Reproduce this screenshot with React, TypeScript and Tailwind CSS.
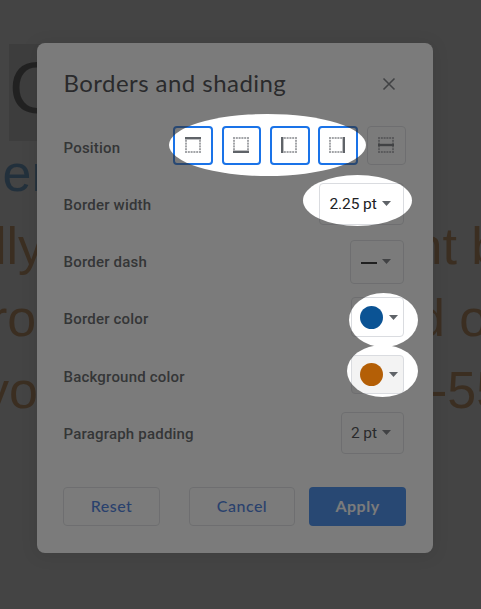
import type { ReactNode } from "react";

type Side = "top" | "bottom" | "left" | "right" | "between";

const bars: Record<Side, [number, number, number, number]> = {
  top: [0, 0, 16, 2.4],
  bottom: [0, 13.6, 16, 2.4],
  left: [0, 0, 2.4, 16],
  right: [13.6, 0, 2.4, 16],
  between: [0, 6.8, 16, 2.4],
};

function BorderIcon({ side }: { side: Side }) {
  const dots: [number, number][] = [];
  for (let i = 0; i < 6; i++) {
    const p = i * 2.8;
    if (side !== "top") dots.push([p, 0]);
    if (side !== "bottom") dots.push([p, 14]);
    if (side !== "left" && i > 0 && i < 5) dots.push([0, p]);
    if (side !== "right" && i > 0 && i < 5) dots.push([14, p]);
  }
  const [x, y, w, h] = bars[side];
  return (
    <svg width="16" height="16" viewBox="0 0 16 16">
      {dots.map(([dx, dy], i) => (
        <rect key={i} x={dx} y={dy} width="2" height="2" fill="#a3a5a8" />
      ))}
      <rect x={x} y={y} width={w} height={h} fill="#5f6368" />
    </svg>
  );
}

function Caret() {
  return (
    <svg className="shrink-0" width="9" height="5" viewBox="0 0 9 5">
      <path d="M0 0h9L4.5 5z" fill="#5f6368" />
    </svg>
  );
}

function Row({ label, children }: { label: string; children: ReactNode }) {
  return (
    <div className="flex h-[57.2px] items-center justify-between">
      <span className="pt-[0.9px] text-[15px] font-medium tracking-[0.2px] whitespace-nowrap text-[#3c4043]">{label}</span>
      {children}
    </div>
  );
}

const box = "mr-[2px] flex items-center rounded-[4px] border border-[#dadce0]";
const button = "flex h-[39px] items-center justify-center rounded-[4px] pb-[2px] text-[16px]";
const active = "h-[39px] rounded-[4px] border-2 border-[#1a73e8] pt-[9px]";

function Document() {
  return (
    <div className="absolute inset-0 overflow-hidden bg-[#666666] font-['Liberation_Sans',Arial,sans-serif] text-[52px] leading-[72px] whitespace-pre">
      <div className="mt-[44px] ml-[9px] h-[97px] w-[200px] bg-[#555555] text-[72px] leading-[88px] text-[#080808]">C</div>
      <div className="-mt-[4px] mb-px -ml-[9px] h-[72px] text-[#0a3050]">ier</div>
      <div className="flex h-[72px] text-[#4e2b08]">
        <span className="-ml-[5px] w-[418.5px] shrink-0">lly</span>
        <span>nt b</span>
      </div>
      <div className="flex h-[72px] text-[#4e2b08]">
        <span className="-ml-[10px] w-[426px] shrink-0">ro</span>
        <span>d o</span>
      </div>
      <div className="flex h-[72px] text-[#4e2b08]">
        <span className="-ml-[17px] w-[447px] shrink-0">yo</span>
        <span>-55</span>
      </div>
    </div>
  );
}

function Spotlight() {
  return (
    <svg className="pointer-events-none absolute inset-0" width="481" height="609" viewBox="0 0 481 609">
      <defs>
        <mask id="spots">
          <rect width="481" height="609" fill="white" />
          <ellipse cx="267.5" cy="145" rx="98.5" ry="31" fill="black" />
          <ellipse cx="357.5" cy="200.5" rx="54.5" ry="25.5" fill="black" />
          <ellipse cx="383.5" cy="320" rx="34.5" ry="27" fill="black" />
          <ellipse cx="382.5" cy="371" rx="35.5" ry="26" fill="black" />
        </mask>
      </defs>
      <rect width="481" height="609" fill="#303030" fillOpacity="0.64" mask="url(#spots)" />
    </svg>
  );
}

export default function App() {
  return (
    <div className="relative h-[609px] w-[481px] overflow-hidden font-['Roboto',sans-serif]">
      <Document />
      <div className="relative mt-[43px] ml-[37px] flex h-[510px] w-[396px] flex-col rounded-[8px] bg-white pr-[27px] pl-[26.5px] shadow-[0_2px_16px_rgba(0,0,0,0.15)]">
        <div className="flex h-[76px] items-center justify-between pt-[6px] pr-[10px]">
          <h1 className="-mt-[2px] font-['Lato',sans-serif] text-[24px] tracking-[0.45px] text-[#202124]">Borders and shading</h1>
          <svg width="14" height="14" viewBox="0 0 14 14" stroke="#5f6368" strokeWidth="1.6">
            <path d="M1.5 1.5l11 11M12.5 1.5l-11 11" />
          </svg>
        </div>
        <Row label="Position">
          <div className="-mt-[4.2px] flex">
            <div className={`${active} w-[40px] pl-[10px]`}>
              <BorderIcon side="top" />
            </div>
            <div className={`${active} ml-[9px] w-[39px] pl-[9px]`}>
              <BorderIcon side="bottom" />
            </div>
            <div className={`${active} ml-[9px] w-[40px] pl-[9px]`}>
              <BorderIcon side="left" />
            </div>
            <div className={`${active} ml-[8px] w-[40px] pl-[9px]`}>
              <BorderIcon side="right" />
            </div>
            <div className="ml-[9px] h-[39px] w-[39px] rounded-[4px] border border-[#dadce0] pt-[10px] pl-[10px]">
              <BorderIcon side="between" />
            </div>
          </div>
        </Row>
        <Row label="Border width">
          <div className={`${box} -mt-[2px] h-[42px] w-[85px] gap-[5px] pl-[9.5px] text-[15.5px] text-[#202124]`}>
            <span className="w-[47.5px] pt-px tracking-[-0.1px] whitespace-nowrap">2.25 pt</span>
            <Caret />
          </div>
        </Row>
        <Row label="Border dash">
          <div className={`${box} h-[44px] w-[54px] gap-[5px] pl-[10px]`}>
            <span className="mt-[2px] h-[2px] w-[16px] bg-black" />
            <Caret />
          </div>
        </Row>
        <Row label="Border color">
          <div className={`${box} -mt-[4px] h-[40px] w-[53px] gap-[6px] pl-[7.5px]`}>
            <span className="h-[23px] w-[23px] rounded-full bg-[#0b5394]" />
            <Caret />
          </div>
        </Row>
        <Row label="Background color">
          <div className={`${box} -mt-[4px] h-[39px] w-[53px] gap-[6px] bg-[#f3f3f3] pl-[7.5px]`}>
            <span className="h-[23px] w-[23px] rounded-full bg-[#b45f06]" />
            <Caret />
          </div>
        </Row>
        <Row label="Paragraph padding">
          <div className={`${box} -mt-[2px] h-[42px] w-[63px] gap-[5px] pl-[9px] text-[15.5px] text-[#202124]`}>
            <span className="w-[26px] pt-[1.5px] tracking-[-0.1px] whitespace-nowrap">2 pt</span>
            <Caret />
          </div>
        </Row>
        <div className="mt-[25px] -ml-[0.5px] flex font-['Lato',sans-serif] tracking-[0.5px]">
          <div className={`${button} w-[97px] border border-[#dadce0] font-medium text-[#1a60d8]`}>Reset</div>
          <div className={`${button} ml-[29px] w-[106px] border border-[#dadce0] font-medium text-[#1a60d8]`}>Cancel</div>
          <div className={`${button} ml-[14px] w-[97px] bg-[#1a73e8] font-bold text-white`}>Apply</div>
        </div>
      </div>
      <Spotlight />
    </div>
  );
}
